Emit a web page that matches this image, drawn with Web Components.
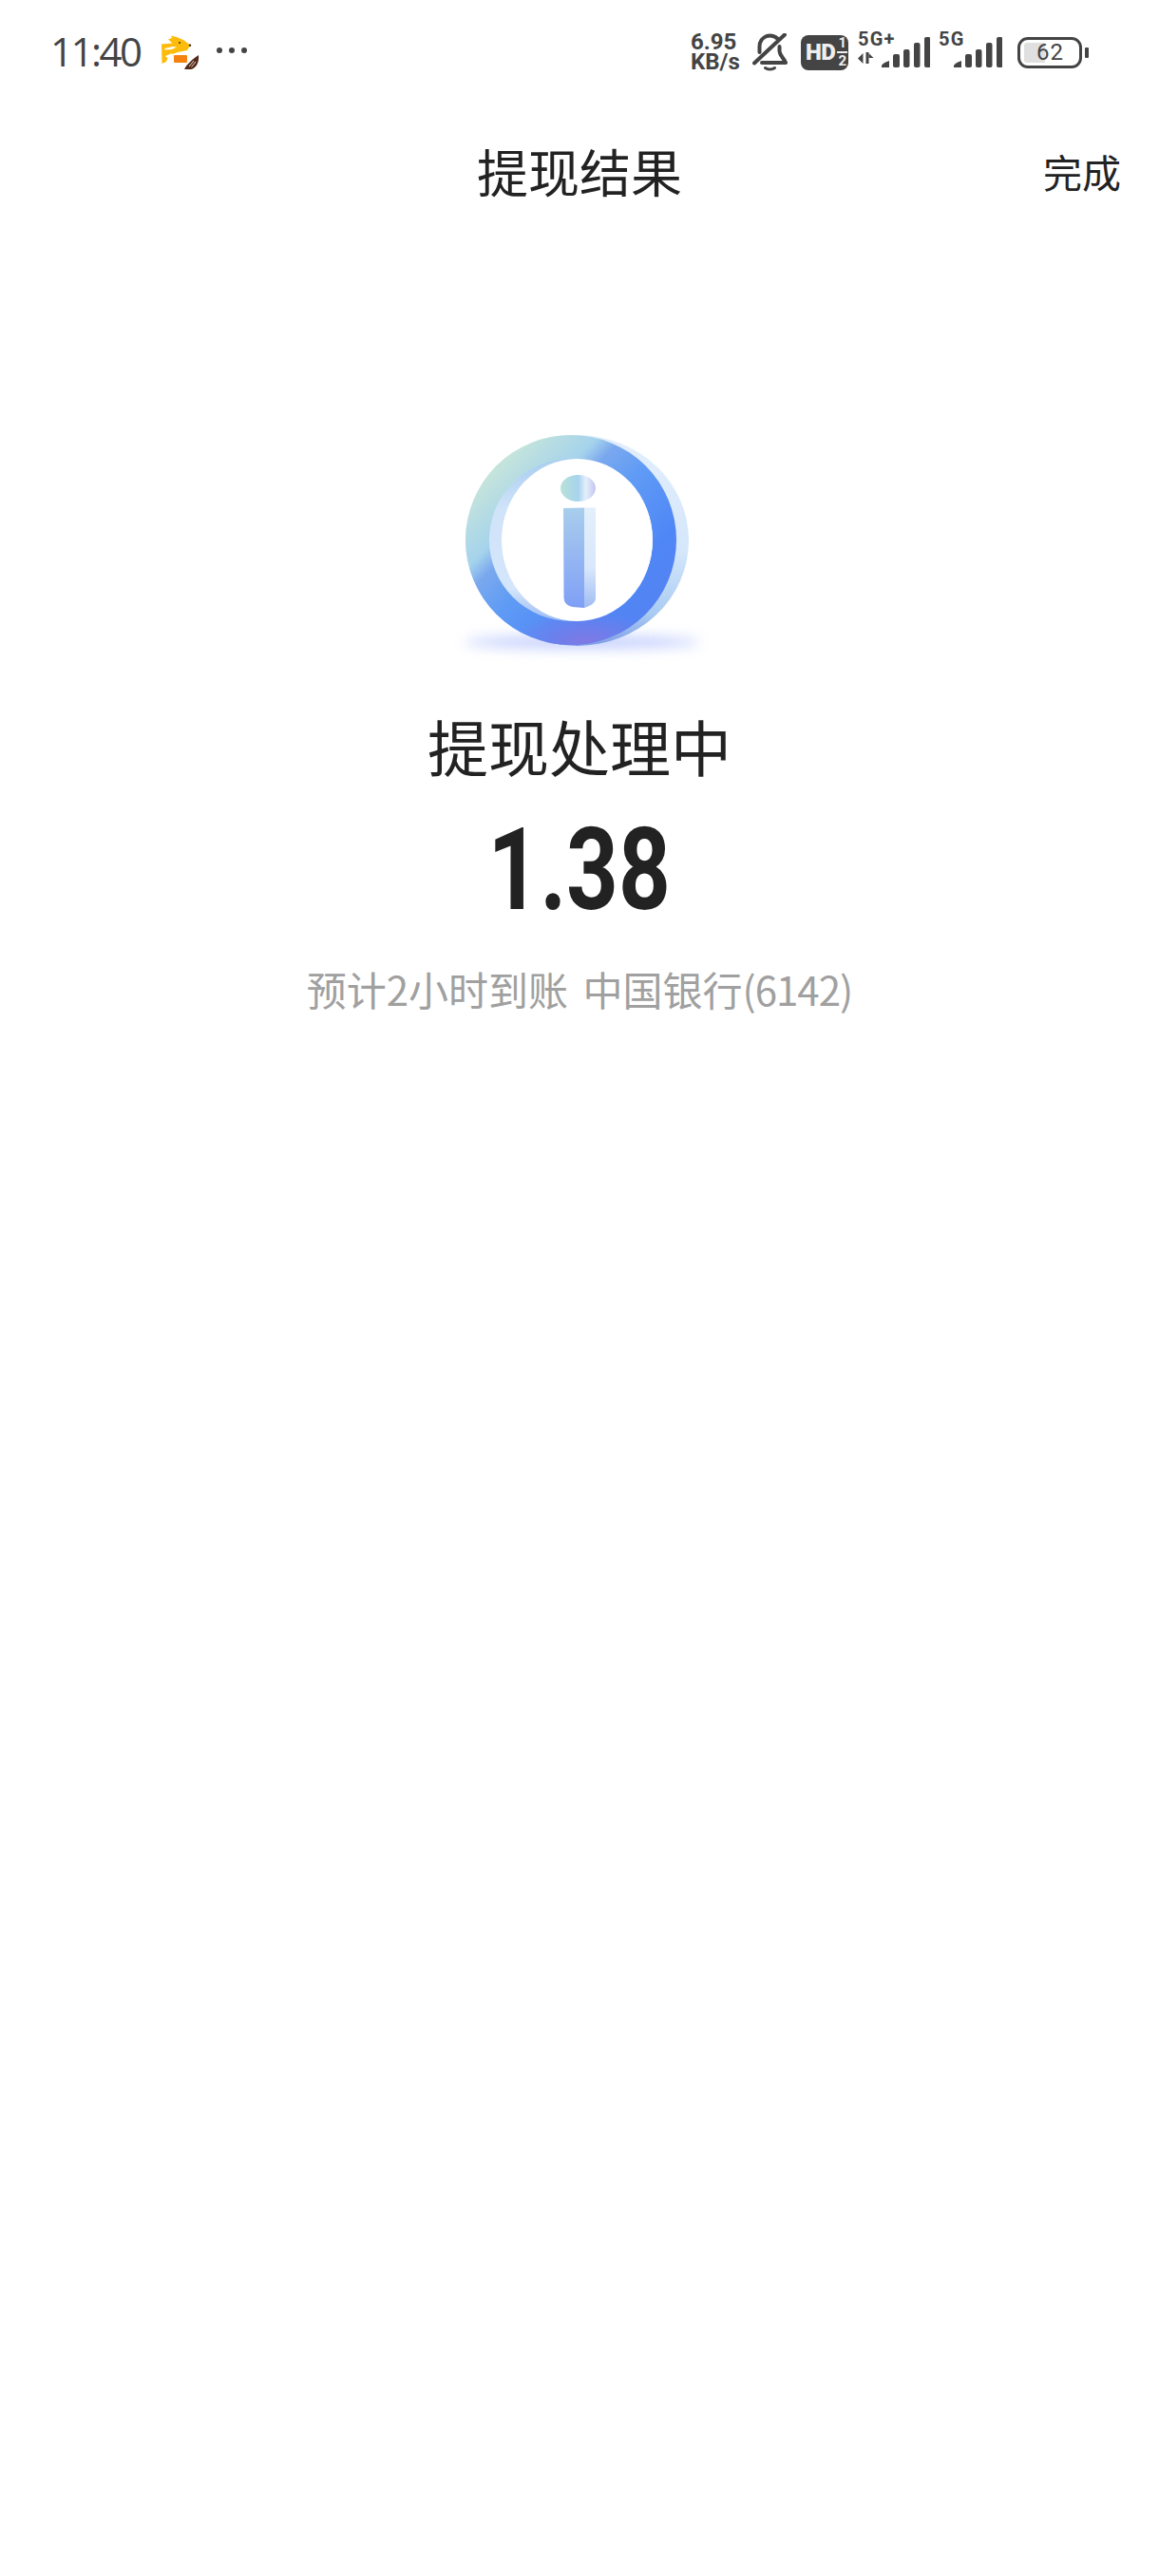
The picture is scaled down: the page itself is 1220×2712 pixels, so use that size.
<!DOCTYPE html>
<html lang="zh">
<head>
<meta charset="utf-8">
<title>提现结果</title>
<style>
html,body{margin:0;padding:0;background:#fff}
body{font-family:"Noto Sans CJK SC","Noto Sans",sans-serif;color:#222;width:1220px;min-height:2712px}
</style>
</head>
<body>
<phone-status></phone-status>
<nav-bar heading="提现结果" action="完成"></nav-bar>
<withdraw-result status="提现处理中" amount="1.38" note="预计2小时到账 中国银行" tail="(6142)"></withdraw-result>
<script>
function def(name, html){
  customElements.define(name, class extends HTMLElement{
    constructor(){
      super();
      const t=document.createElement('template');
      t.innerHTML=html;
      this.attachShadow({mode:'open'}).appendChild(t.content.cloneNode(true));
    }
    connectedCallback(){
      this.shadowRoot.querySelectorAll('[data-attr]').forEach(e=>{e.textContent=this.getAttribute(e.dataset.attr)||''});
    }
  });
}

def('app-mascot',`<style>:host{display:block;width:42px;height:40px}svg{display:block}</style>
<svg width="42" height="40" viewBox="0 0 42 40">
<path d="M2 12.500 L13.500 11.500 L9 7.500 L13 6 L12 3.500 L18 5 L25 8 L32.500 13.500 L29 19 L19 21 L13.500 23 L10 24 L7 31 L2.500 33 Z" fill="#fdbb0c"/>
<path d="M5 17 L14 15 L18 15.500 L13 18 L6 18.500 Z" fill="#fff"/>
<path d="M6 25 L13 22 L14 24 L8 27 Z" fill="#fff"/>
<rect x="15" y="24" width="14" height="8" rx="1" fill="#f5820f"/>
<path d="M26 39 C29 33 34 29 41 24 C42 32 38 38 33 39 Z" fill="#54291a"/>
<path d="M31 36 L36 30 M33.500 36.500 L38 31" stroke="#e8d8c8" stroke-width="1"/>
<circle cx="21" cy="11" r="1" fill="#3a2a10"/>
<circle cx="32" cy="13.800" r="1.200" fill="#3a2a10"/>
</svg>`);

def('net-speed',`<style>:host{display:block;font:700 24px/21px Roboto,sans-serif;color:#444;width:52px;text-align:left}div{white-space:nowrap}</style>
<div>6.95</div><div>KB/s</div>`);

def('mute-bell',`<style>:host{display:block;width:37px;height:40px}svg{display:block}</style>
<svg width="37" height="40" viewBox="0 0 37 40" fill="none" stroke="#444" stroke-width="4" stroke-linecap="round" stroke-linejoin="round">
<path d="M27 6 C23 2.500 19 2 15 3 C10 5 7.500 9 7.500 14 L7.500 20"/>
<path d="M28.500 14 L28.500 19 C29 24 33 26 35 31 L10 31"/>
<path d="M2 31.500 L34 1.500"/>
<path d="M13.500 36.500 C16 38.500 21 38.500 23.500 36.500" stroke-width="3"/>
</svg>`);

def('hd-badge',`<style>
:host{display:flex;align-items:center;box-sizing:border-box;width:50px;height:37px;background:#444;border-radius:8px;color:#eee;font-family:Roboto,sans-serif;font-weight:700;padding-left:5px;gap:2px}
b{font-size:24px;line-height:37px;letter-spacing:-.5px}
i{display:flex;flex-direction:column;align-items:center;font-style:normal;font-size:15px;line-height:15px}
i::before{content:"";order:1;width:11px;height:2px;background:#eee;margin:1px 0}
i span:last-child{order:2}
</style><b>HD</b><i><span>1</span><span>2</span></i>`);

def('sig-bars',`<style>:host{display:block;width:51px;height:32px}svg{display:block}</style>
<svg width="51" height="32" viewBox="0 0 51 32" fill="#444">
<path d="M0 32 L0 30 Q1 27.500 8 25 L8 32 Z"/>
<rect x="12" y="18" width="7" height="14" rx="2"/>
<rect x="23" y="13" width="6.500" height="19" rx="2"/>
<rect x="34" y="6" width="6.500" height="26" rx="2"/>
<rect x="45" y="0" width="6.500" height="32" rx="2"/>
</svg>`);

def('net-cell',`<style>
:host{display:flex;align-items:flex-end;height:40px}
.lab{align-self:flex-start;width:var(--lab,25px);white-space:nowrap;font:700 20px/14px Roboto,sans-serif;color:#444;margin-top:-1px;letter-spacing:1.200px}
.lab svg{display:block}
slot[name]{display:block;margin-top:5px}
sig-bars{margin-bottom:4px}
</style>
<div class="lab"><slot></slot><slot name="arrows"></slot></div><sig-bars></sig-bars>`);

def('battery-pill',`<style>
:host{display:flex;align-items:center;gap:3px}
.b{position:relative;box-sizing:border-box;width:68px;height:33px;border:3.500px solid #444;border-radius:11px;font:400 24px/26px Roboto,sans-serif;color:#444;text-align:center;letter-spacing:1px}
.f{position:absolute;left:4px;top:3px;bottom:3px;width:22px;background:#e0e0e0;border-radius:3px 0 0 3px}
.t{position:relative;display:block;padding-left:1px}
.c{width:4px;height:11px;background:#444;border-radius:1px}
</style><div class="b"><span class="f"></span><span class="t">62</span></div><div class="c"></div>`);

def('phone-status',`<style>
:host{display:flex;align-items:center;justify-content:space-between;box-sizing:border-box;height:108px;padding:2px 74px 0 53px;color:#444}
.l,.r{display:flex;align-items:center}
.l{margin-top:-2px}
.time{font:500 42px/50px "Open Sans",Roboto,sans-serif;letter-spacing:-2.500px;color:#444;width:115px}
.dots{display:flex;gap:7px;margin-left:18px;margin-top:-2px}
.dots span{width:6px;height:6px;border-radius:50%;background:#444}
net-speed{margin-right:13px}
mute-bell{margin-right:14px}
hd-badge{margin-right:10px}
net-cell.a{margin-right:9px}
net-cell.b{margin-right:16px;--lab:16px}
</style>
<div class="l"><span class="time">11:40</span><app-mascot></app-mascot><div class="dots"><span></span><span></span><span></span></div></div>
<div class="r">
<net-speed></net-speed><mute-bell></mute-bell><hd-badge></hd-badge>
<net-cell class="a">5G+<svg slot="arrows" width="17" height="12" viewBox="0 0 17 12" fill="#444"><path d="M0 6.500 L5.500 1 L5.500 12 Z"/><rect x="8.500" y="0" width="3" height="12"/><path d="M11.500 1 L16.500 6 L11.500 6 Z"/></svg></net-cell>
<net-cell class="b">5G</net-cell>
<battery-pill></battery-pill>
</div>`);

def('nav-bar',`<style>
:host{display:grid;grid-template-columns:1fr auto 1fr;align-items:center;box-sizing:border-box;height:144px;padding:0 40px;color:#222}
.t{grid-column:2;font-size:54px;line-height:70px;white-space:nowrap}
.a{grid-column:3;justify-self:end;font-size:41px;line-height:56px}
</style><div class="t" data-attr="heading"></div><div class="a" data-attr="action"></div>`);

def('info-emblem',`<style>:host{display:block;width:340px;height:280px}svg{display:block}</style>
<svg width="340" height="280" viewBox="0 0 340 280">
<defs>
<linearGradient id="ring" gradientUnits="userSpaceOnUse" x1="50" y1="28" x2="272" y2="250">
<stop offset="0" stop-color="#cfe6d8"/><stop offset=".16" stop-color="#c3e3dc"/><stop offset=".32" stop-color="#a5d3ec"/><stop offset=".38" stop-color="#7aa8ee"/><stop offset=".5" stop-color="#5f9bf5"/><stop offset=".72" stop-color="#4f86f6"/><stop offset="1" stop-color="#5a80ee"/>
</linearGradient>
<linearGradient id="rim" x1="0" y1="0" x2="0" y2="1">
<stop offset="0" stop-color="#e2eefc"/><stop offset=".55" stop-color="#d5e7fb"/><stop offset=".85" stop-color="#a9cbf2"/><stop offset="1" stop-color="#7f9fe8"/>
</linearGradient>
<linearGradient id="wall" x1="0" y1="0" x2="0" y2="1">
<stop offset="0" stop-color="#a8cdf0"/><stop offset=".3" stop-color="#cfe3f9"/><stop offset=".8" stop-color="#d4e6fb"/><stop offset="1" stop-color="#9dbcf2"/>
</linearGradient>
<radialGradient id="pur" cx=".5" cy=".5" r=".5">
<stop offset="0" stop-color="#8578e2" stop-opacity=".9"/><stop offset="1" stop-color="#8578e2" stop-opacity="0"/>
</radialGradient>
<linearGradient id="dot" x1="0" y1="0" x2="1" y2="0">
<stop offset="0" stop-color="#b9e2d6"/><stop offset=".5" stop-color="#a7d3ee"/><stop offset=".72" stop-color="#e4effc"/><stop offset="1" stop-color="#c3c5f0"/>
</linearGradient>
<linearGradient id="stem" x1="0" y1="0" x2="0" y2="1">
<stop offset="0" stop-color="#a8ceec"/><stop offset=".5" stop-color="#95b6f2"/><stop offset="1" stop-color="#7f9ff6"/>
</linearGradient>
<linearGradient id="side" x1="0" y1="0" x2="0" y2="1">
<stop offset="0" stop-color="#e3effc"/><stop offset=".6" stop-color="#d8e7fc"/><stop offset="1" stop-color="#9fbcf2"/>
</linearGradient>
<filter id="bl" x="-30%" y="-300%" width="160%" height="700%"><feGaussianBlur stdDeviation="7"/></filter>
<clipPath id="front"><ellipse cx="161" cy="138.500" rx="111" ry="110.500"/></clipPath>
</defs>
<ellipse cx="173" cy="246" rx="124" ry="6" fill="#8ea4fb" opacity=".6" filter="url(#bl)"/>
<ellipse cx="167.500" cy="139" rx="117.500" ry="111" fill="url(#rim)"/>
<ellipse cx="161" cy="138.500" rx="111" ry="110.500" fill="url(#ring)"/>
<g clip-path="url(#front)"><ellipse cx="175" cy="245" rx="75" ry="32" fill="url(#pur)"/></g>
<ellipse cx="161" cy="138.500" rx="86" ry="85.500" fill="url(#wall)"/>
<ellipse cx="167.500" cy="138.500" rx="79.500" ry="85.500" fill="#fff"/>
<ellipse cx="168.500" cy="84" rx="18.500" ry="14" fill="url(#dot)"/>
<path d="M175 104.500 L187 104.500 L187 200 Q187 206 175 210 Z" fill="url(#side)"/>
<path d="M153 105 L175 104.500 L175 210 L163 209 Q153.500 207 153.500 199 Z" fill="url(#stem)"/>
</svg>`);

def('withdraw-result',`<style>
:host{display:flex;flex-direction:column;align-items:center;color:#222}
info-emblem{margin-top:178px}
.s{margin-top:28px;font-size:64px;line-height:92px;white-space:nowrap}
.m{margin-top:26px;font:700 121px/120px Roboto,sans-serif;color:#222;transform:scaleX(.79);white-space:nowrap}
.n{margin-top:35px;font-size:42px;line-height:60px;color:#a0a0a0;white-space:pre;word-spacing:6px}
.n span:last-child{letter-spacing:-1px}
</style>
<info-emblem></info-emblem>
<div class="s" data-attr="status"></div>
<div class="m" data-attr="amount"></div>
<div class="n"><span data-attr="note"></span><span data-attr="tail"></span></div>`);
</script>
</body>
</html>
